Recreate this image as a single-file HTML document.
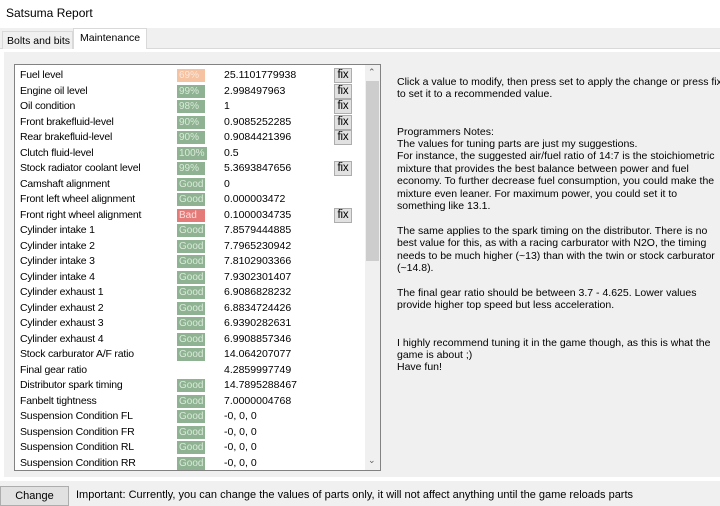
<!DOCTYPE html>
<html><head><style>
*{margin:0;padding:0;box-sizing:border-box}
body{width:720px;height:495px;overflow:hidden;background:#f0f0f0;font-family:"Liberation Sans",sans-serif;font-size:11px;color:#000;position:relative}
.title{position:absolute;left:0;top:0;width:720px;height:28px;background:#fff;font-size:12px;padding:6px 0 0 6px}
.panel{position:absolute;left:0;top:48px;width:720px;height:433px;background:#fff;border-top:1px solid #d9d9d9}
.inner{position:absolute;left:4px;top:52px;width:716px;height:425px;background:#f0f0f0}
.tab1{position:absolute;left:2px;top:31px;width:71px;height:18px;border:1px solid #d9d9d9;border-bottom:none;background:#f0f0f0;padding:3px 0 0 4px;white-space:nowrap;font-size:10.5px}
.tab2{position:absolute;left:73px;top:28px;width:74px;height:21px;border:1px solid #d9d9d9;border-bottom:none;background:#fff;padding:3px 0 0 6px;white-space:nowrap;font-size:10.5px}
.list{position:absolute;left:14px;top:64px;width:367px;height:407px;background:#fff;border:1px solid #828282}
.row{position:absolute;left:5px;height:15px;font-size:10.5px;line-height:15px;white-space:nowrap;letter-spacing:-0.2px}
.b{position:absolute;left:157px;top:1px;height:13px;width:28px;background:#8fb392;color:#d9ead9;font-size:10px;line-height:13px;padding-left:2px;letter-spacing:0}
.b.o{background:#f5c2a2;color:#fde8da}.b.r{background:#e57b78;color:#fbe0df}.b.w{width:30px}
.v{position:absolute;left:204px;top:0;white-space:nowrap;letter-spacing:0}
.fix{position:absolute;left:314px;top:0;width:18px;height:15px;background:#e1e1e1;border:1px solid #adadad;text-align:center;line-height:13px;font-size:11.5px}
.sb{position:absolute;left:350px;top:0;width:15px;height:405px;background:#f0f0f0}
.thumb{position:absolute;left:1px;top:16px;width:13px;height:180px;background:#cdcdcd}
.arr{position:absolute;left:3px;font-size:9px;color:#606060}
.txt{position:absolute;left:397px;top:76px;width:323px;overflow:hidden;font-size:10.5px;line-height:12.4px;white-space:nowrap;color:#000}
.btn{position:absolute;left:0;top:486px;width:69px;height:20px;border:1px solid #adadad;background:#e1e1e1;text-align:center;padding-top:3px}
.bot{position:absolute;left:76px;top:489px;width:644px;overflow:hidden;font-size:11px;white-space:nowrap}
</style></head><body>
<div class="title">Satsuma Report</div>
<div class="panel"></div>
<div class="inner"></div>
<div class="tab1">Bolts and bits</div>
<div class="tab2">Maintenance</div>
<div class="list">
<div class="row" style="top:3px">Fuel level<span class="b o">69%</span><span class="v">25.1101779938</span><span class="fix">fix</span></div>
<div class="row" style="top:18.5px">Engine oil level<span class="b">99%</span><span class="v">2.998497963</span><span class="fix">fix</span></div>
<div class="row" style="top:34px">Oil condition<span class="b">98%</span><span class="v">1</span><span class="fix">fix</span></div>
<div class="row" style="top:49.5px">Front brakefluid-level<span class="b">90%</span><span class="v">0.9085252285</span><span class="fix">fix</span></div>
<div class="row" style="top:65px">Rear brakefluid-level<span class="b">90%</span><span class="v">0.9084421396</span><span class="fix">fix</span></div>
<div class="row" style="top:80.5px">Clutch fluid-level<span class="b w">100%</span><span class="v">0.5</span></div>
<div class="row" style="top:96px">Stock radiator coolant level<span class="b">99%</span><span class="v">5.3693847656</span><span class="fix">fix</span></div>
<div class="row" style="top:111.5px">Camshaft alignment<span class="b">Good</span><span class="v">0</span></div>
<div class="row" style="top:127px">Front left wheel alignment<span class="b">Good</span><span class="v">0.000003472</span></div>
<div class="row" style="top:142.5px">Front right wheel alignment<span class="b r">Bad</span><span class="v">0.1000034735</span><span class="fix">fix</span></div>
<div class="row" style="top:158px">Cylinder intake 1<span class="b">Good</span><span class="v">7.8579444885</span></div>
<div class="row" style="top:173.5px">Cylinder intake 2<span class="b">Good</span><span class="v">7.7965230942</span></div>
<div class="row" style="top:189px">Cylinder intake 3<span class="b">Good</span><span class="v">7.8102903366</span></div>
<div class="row" style="top:204.5px">Cylinder intake 4<span class="b">Good</span><span class="v">7.9302301407</span></div>
<div class="row" style="top:220px">Cylinder exhaust 1<span class="b">Good</span><span class="v">6.9086828232</span></div>
<div class="row" style="top:235.5px">Cylinder exhaust 2<span class="b">Good</span><span class="v">6.8834724426</span></div>
<div class="row" style="top:251px">Cylinder exhaust 3<span class="b">Good</span><span class="v">6.9390282631</span></div>
<div class="row" style="top:266.5px">Cylinder exhaust 4<span class="b">Good</span><span class="v">6.9908857346</span></div>
<div class="row" style="top:282px">Stock carburator A/F ratio<span class="b">Good</span><span class="v">14.064207077</span></div>
<div class="row" style="top:297.5px">Final gear ratio<span class="v">4.2859997749</span></div>
<div class="row" style="top:313px">Distributor spark timing<span class="b">Good</span><span class="v">14.7895288467</span></div>
<div class="row" style="top:328.5px">Fanbelt tightness<span class="b">Good</span><span class="v">7.0000004768</span></div>
<div class="row" style="top:344px">Suspension Condition FL<span class="b">Good</span><span class="v">-0, 0, 0</span></div>
<div class="row" style="top:359.5px">Suspension Condition FR<span class="b">Good</span><span class="v">-0, 0, 0</span></div>
<div class="row" style="top:375px">Suspension Condition RL<span class="b">Good</span><span class="v">-0, 0, 0</span></div>
<div class="row" style="top:390.5px">Suspension Condition RR<span class="b">Good</span><span class="v">-0, 0, 0</span></div>
<div class="sb"><span class="arr" style="top:2px">&#8963;</span><div class="thumb"></div><span class="arr" style="top:390px">&#8964;</span></div>
</div>
<div class="txt">Click a value to modify, then press set to apply the change or press fix<br>to set it to a recommended value.<br><br><br>Programmers Notes:<br>The values for tuning parts are just my suggestions.<br>For instance, the suggested air/fuel ratio of 14:7 is the stoichiometric<br>mixture that provides the best balance between power and fuel<br>economy. To further decrease fuel consumption, you could make the<br>mixture even leaner. For maximum power, you could set it to<br>something like 13.1.<br><br>The same applies to the spark timing on the distributor. There is no<br>best value for this, as with a racing carburator with N2O, the timing<br>needs to be much higher (~13) than with the twin or stock carburator<br>(~14.8).<br><br>The final gear ratio should be between 3.7 - 4.625. Lower values<br>provide higher top speed but less acceleration.<br><br><br>I highly recommend tuning it in the game though, as this is what the<br>game is about ;)<br>Have fun!</div>
<div class="btn">Change</div>
<div class="bot">Important: Currently, you can change the values of parts only, it will not affect anything until the game reloads parts</div>
</body></html>
